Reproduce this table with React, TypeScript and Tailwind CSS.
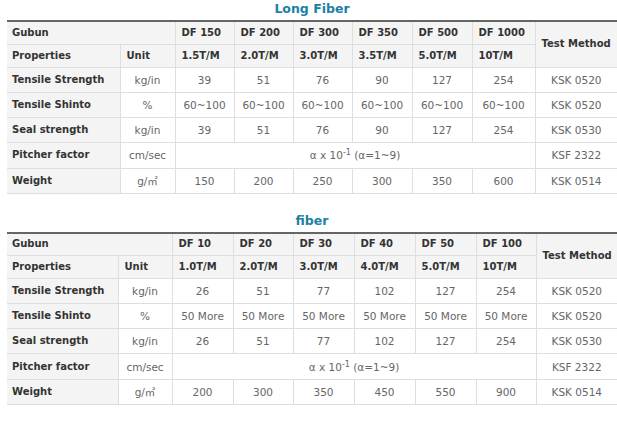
const font = { fontFamily: '"DejaVu Sans", Verdana, "Noto Sans CJK KR", sans-serif' }

type Spec = {
	title: string
	widths: number[]
	grades: string[]
	ratios: string[]
	tensile: string[]
	shinto: string[]
	seal: string[]
	weight: string[]
}

const longFiber: Spec = {
	title: 'Long Fiber',
	widths: [113, 55, 59, 59, 59, 60, 60, 63, 82],
	grades: ['DF 150', 'DF 200', 'DF 300', 'DF 350', 'DF 500', 'DF 1000'],
	ratios: ['1.5T/M', '2.0T/M', '3.0T/M', '3.5T/M', '5.0T/M', '10T/M'],
	tensile: ['39', '51', '76', '90', '127', '254'],
	shinto: ['60~100', '60~100', '60~100', '60~100', '60~100', '60~100'],
	seal: ['39', '51', '76', '90', '127', '254'],
	weight: ['150', '200', '250', '300', '350', '600'],
}

const fiber: Spec = {
	title: 'fiber',
	widths: [111, 54, 61, 60, 61, 61, 61, 60, 81],
	grades: ['DF 10', 'DF 20', 'DF 30', 'DF 40', 'DF 50', 'DF 100'],
	ratios: ['1.0T/M', '2.0T/M', '3.0T/M', '4.0T/M', '5.0T/M', '10T/M'],
	tensile: ['26', '51', '77', '102', '127', '254'],
	shinto: ['50 More', '50 More', '50 More', '50 More', '50 More', '50 More'],
	seal: ['26', '51', '77', '102', '127', '254'],
	weight: ['200', '300', '350', '450', '550', '900'],
}

const th =
	'bg-[#f4f4f4] border border-[#dedede] text-left font-bold text-[10px] text-[#333] whitespace-nowrap px-[6px] py-0'
const label =
	'bg-[#f4f4f4] border border-[#dedede] border-l-0 text-left font-bold text-[10px] text-[#333] whitespace-nowrap pl-[5px] py-0'
const td = 'border border-[#dedede] text-center text-[10.5px] text-[#666] whitespace-nowrap px-0 py-0'
const last = 'border border-[#dedede] border-r-0 text-center text-[10.5px] text-[#666] whitespace-nowrap px-0 py-0'

const SpecTable = ({ spec }: { spec: Spec }) => {
	const bodyRow = (name: string, unit: string, values: string[], method: string) => (
		<tr className="h-[25px]">
			<td className={label}>{name}</td>
			<td className={td}>{unit}</td>
			{values.map((v, i) => (
				<td key={i} className={td}>
					{v}
				</td>
			))}
			<td className={last}>{method}</td>
		</tr>
	)

	return (
		<div>
			<h3 className="h-[20px] pt-[1px] text-center text-[12.5px] font-bold leading-[16px] text-[#1b7fa3]">
				{spec.title}
			</h3>
			<table className="w-[610px] table-fixed border-collapse border-t-2 border-[#666] leading-[14px]">
				<colgroup>
					{spec.widths.map((w, i) => (
						<col key={i} style={{ width: w }} />
					))}
				</colgroup>
				<tbody>
					<tr className="h-[23px]">
						<th colSpan={2} className={`${th} border-l-0 border-t-0 pl-[5px]`}>
							Gubun
						</th>
						{spec.grades.map((g) => (
							<th key={g} className={`${th} border-t-0`}>
								{g}
							</th>
						))}
						<th rowSpan={2} className={`${th} border-r-0 border-t-0 text-center`}>
							Test Method
						</th>
					</tr>
					<tr className="h-[23px]">
						<th className={`${th} border-l-0 pl-[5px]`}>Properties</th>
						<th className={th}>Unit</th>
						{spec.ratios.map((r, i) => (
							<th key={i} className={th}>
								{r}
							</th>
						))}
					</tr>
					{bodyRow('Tensile Strength', 'kg/in', spec.tensile, 'KSK 0520')}
					{bodyRow('Tensile Shinto', '%', spec.shinto, 'KSK 0520')}
					{bodyRow('Seal strength', 'kg/in', spec.seal, 'KSK 0530')}
					<tr className="h-[26px]">
						<td className={label}>Pitcher factor</td>
						<td className={td}>cm/sec</td>
						<td colSpan={6} className={td}>
							α x 10<sup className="text-[8px]">-1</sup> (α=1~9)
						</td>
						<td className={last}>KSF 2322</td>
					</tr>
					{bodyRow('Weight', 'g/㎡', spec.weight, 'KSK 0514')}
				</tbody>
			</table>
		</div>
	)
}

const App = () => {
	return (
		<div className="w-[617px] h-[423px] overflow-hidden bg-white pl-[7px]" style={font}>
			<SpecTable spec={longFiber} />
			<div className="h-[18px]" />
			<SpecTable spec={fiber} />
		</div>
	)
}

export default App
